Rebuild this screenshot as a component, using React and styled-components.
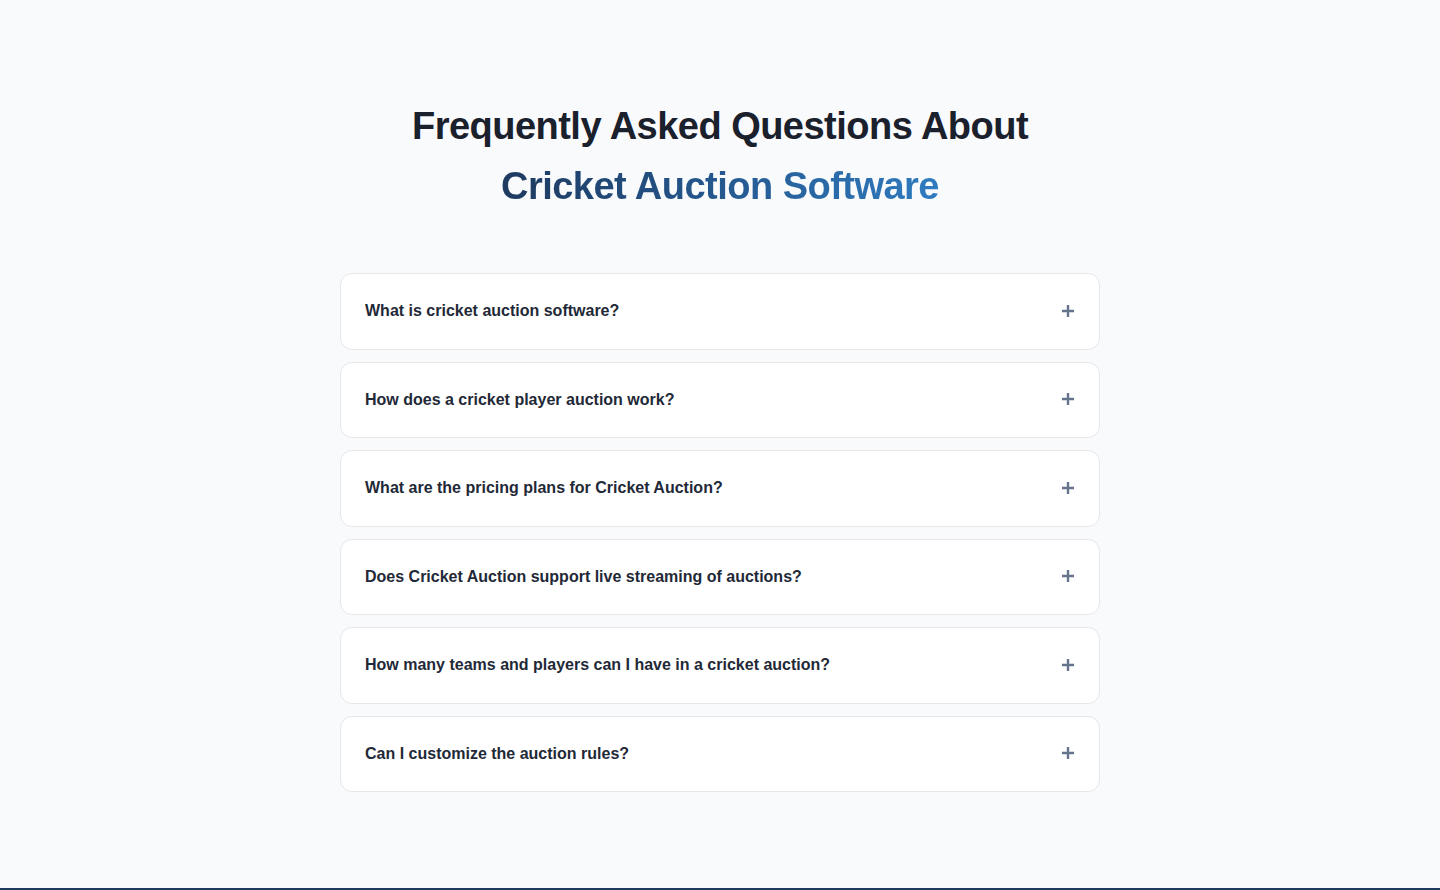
import React, { useState } from "react";
import styled, { createGlobalStyle } from "styled-components";

const GlobalStyle = createGlobalStyle`
  * { box-sizing: border-box; }
  html, body { margin: 0; padding: 0; }
  body {
    background: #f8fafc;
    font-family: "Liberation Sans", Arial, sans-serif;
    color: #1f2937;
  }
`;

const Section = styled.section`
  padding: 96px 24px;
  background: #f8fafc;
`;

const Container = styled.div`
  max-width: 760px;
  margin: 0 auto;
`;

const Heading = styled.h2`
  margin: 0 0 57px;
  text-align: center;
  font-size: 38px;
  line-height: 60px;
  font-weight: 700;
  color: #1a202c;
  letter-spacing: -0.52px;
`;

const Accent = styled.span`
  display: inline-block;
  background: linear-gradient(90deg, #1e3a5f 0%, #24558a 45%, #2f7bc0 100%);
  -webkit-background-clip: text;
  background-clip: text;
  color: transparent;
`;

const List = styled.div`
  display: flex;
  flex-direction: column;
  gap: 12px;
`;

const Card = styled.div`
  background: #ffffff;
  border: 1px solid #e5e7eb;
  border-radius: 12px;
`;

const Question = styled.button`
  width: 100%;
  display: flex;
  align-items: center;
  justify-content: space-between;
  padding: 24px 25px 24px 24px;
  background: none;
  border: 0;
  cursor: pointer;
  text-align: left;
  font-family: inherit;
  font-size: 16px;
  line-height: 26.5px;
  font-weight: 700;
  color: #1f2937;
`;

const Answer = styled.div`
  padding: 0 24px 24px;
  font-size: 15px;
  line-height: 24px;
  color: #4b5563;
`;

const Footer = styled.footer`
  height: 120px;
  background: #1e3a5f;
`;

const IconSvg = styled.svg`
  flex: none;
  margin-top: -1px;
`;

const PlusIcon = ({ open }) => (
  <IconSvg width="12" height="12" viewBox="0 0 12 12" aria-hidden="true">
    <path
      d={open ? "M0 6h12" : "M6 0v12M0 6h12"}
      stroke="#64748b"
      strokeWidth="2.4"
      fill="none"
    />
  </IconSvg>
);

const faqs = [
  {
    q: "What is cricket auction software?",
    a: "Cricket auction software lets organisers run player auctions digitally, with live bidding, team purses and instant results.",
  },
  {
    q: "How does a cricket player auction work?",
    a: "Players are registered with a base price, teams bid in turns, and the highest bid within the purse wins the player.",
  },
  {
    q: "What are the pricing plans for Cricket Auction?",
    a: "Plans are available for single tournaments as well as leagues that run auctions every season.",
  },
  {
    q: "Does Cricket Auction support live streaming of auctions?",
    a: "Yes, the auction screen can be shared as an overlay for live streams.",
  },
  {
    q: "How many teams and players can I have in a cricket auction?",
    a: "You can add as many teams and players as your tournament needs.",
  },
  {
    q: "Can I customize the auction rules?",
    a: "Base prices, bid increments, purse limits and squad sizes can all be configured.",
  },
];

export default function App() {
  const [open, setOpen] = useState(-1);
  return (
    <>
      <GlobalStyle />
      <Section>
        <Container>
          <Heading>
            Frequently Asked Questions About
            <br />
            <Accent>Cricket Auction Software</Accent>
          </Heading>
          <List>
            {faqs.map((item, i) => (
              <Card key={item.q}>
                <Question onClick={() => setOpen(open === i ? -1 : i)}>
                  <span>{item.q}</span>
                  <PlusIcon open={open === i} />
                </Question>
                {open === i && <Answer>{item.a}</Answer>}
              </Card>
            ))}
          </List>
        </Container>
      </Section>
      <Footer />
    </>
  );
}
